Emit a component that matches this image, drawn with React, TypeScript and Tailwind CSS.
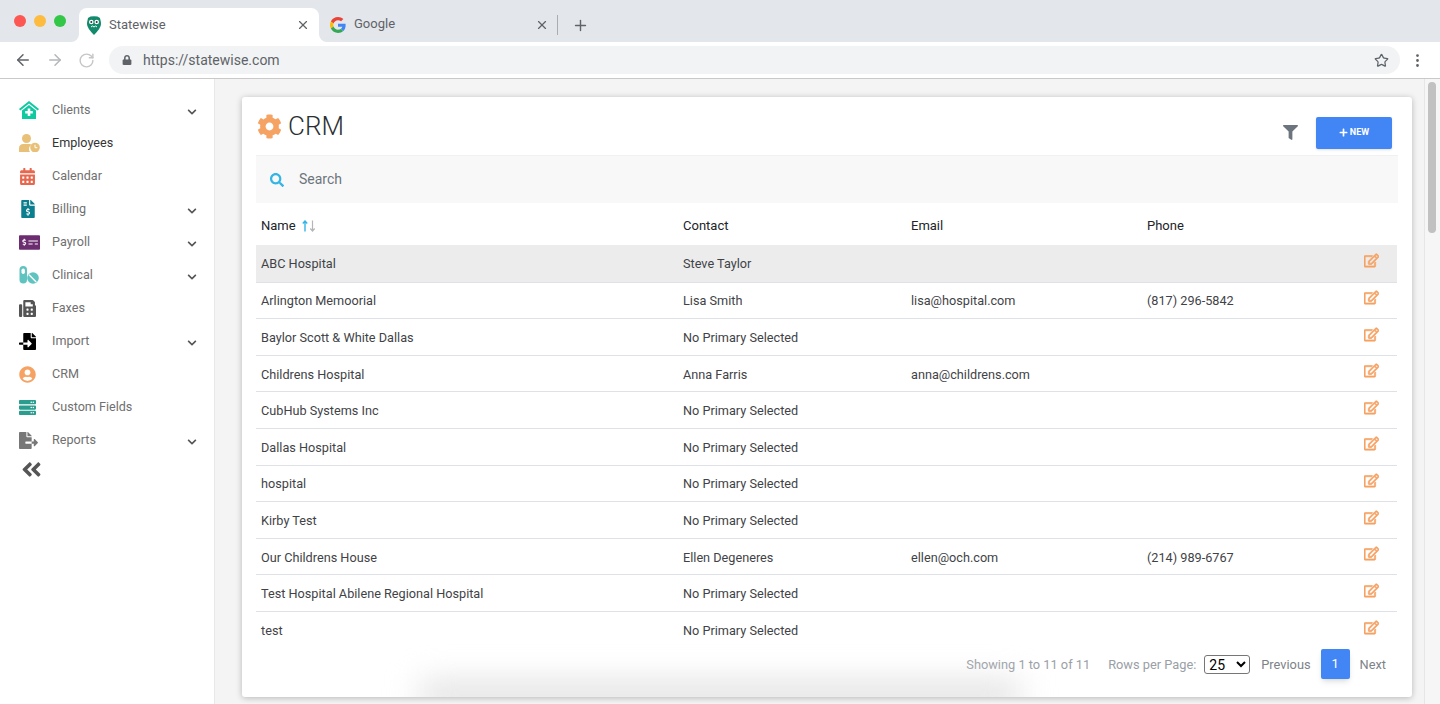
import {
  FaAngleDoubleLeft,
  FaCalendarAlt,
  FaChevronDown,
  FaCog,
  FaFax,
  FaFileExport,
  FaFileImport,
  FaFileInvoiceDollar,
  FaFilter,
  FaLock,
  FaMoneyCheckAlt,
  FaPlus,
  FaRegEdit,
  FaSearch,
  FaServer,
  FaUserCircle,
} from "react-icons/fa";
import { FiMoreVertical } from "react-icons/fi";
import { LuArrowLeft, LuArrowRight, LuPlus, LuRotateCw, LuStar, LuX } from "react-icons/lu";
import type { ReactNode } from "react";

function OwlIcon() {
  return (
    <svg width="14" height="19" viewBox="0 0 14 19">
      <path d="M1 2 L3.500 .6 Q7 0 10.500 .6 L13 2 Q14 6 14 8 Q14 12 7 19 Q0 12 0 8 Q0 6 1 2Z" fill="#128a6b" />
      <circle cx="4.300" cy="6" r="2.300" fill="#fff" />
      <circle cx="9.700" cy="6" r="2.300" fill="#fff" />
      <circle cx="4.300" cy="6" r="1" fill="#333" />
      <circle cx="9.700" cy="6" r="1" fill="#333" />
      <path d="M4 11 L5.500 10 L7 11 L8.500 10 L10 11" stroke="#fff" strokeWidth="1" fill="none" />
    </svg>
  );
}

function GoogleIcon() {
  return (
    <svg width="16" height="16" viewBox="0 0 48 48">
      <path fill="#EA4335" d="M24 9.500c3.500 0 6.700 1.200 9.200 3.600l6.900-6.900C35.900 2.400 30.500 0 24 0 14.600 0 6.500 5.400 2.600 13.200l8 6.200C12.500 13.700 17.800 9.500 24 9.500z" />
      <path fill="#4285F4" d="M46.900 24.500c0-1.600-.1-3.100-.4-4.500H24v9h12.900c-.6 3-2.200 5.500-4.700 7.200l7.700 6c4.500-4.200 7-10.300 7-17.700z" />
      <path fill="#FBBC05" d="M10.500 28.600c-.5-1.400-.8-3-.8-4.600s.3-3.200.8-4.600l-8-6.200C.9 16.500 0 20.100 0 24s.9 7.500 2.600 10.800l7.900-6.200z" />
      <path fill="#34A853" d="M24 48c6.500 0 11.900-2.100 15.900-5.800l-7.700-6c-2.100 1.400-4.900 2.300-8.200 2.300-6.200 0-11.500-4.200-13.400-9.900l-8 6.200C6.500 42.600 14.600 48 24 48z" />
    </svg>
  );
}

function HouseIcon() {
  return (
    <svg width="20" height="18" viewBox="0 0 20 18">
      <path d="M10 0 L20 8 L18.700 9.500 L10 2.600 L1.300 9.500 L0 8Z" fill="#0fc9a0" />
      <path d="M10 4 L17 9.500 V18 H3 V9.500Z" fill="#0fc9a0" />
      <path d="M8.700 7.500 H11.300 V10 H13.800 V12.600 H11.300 V15 H8.700 V12.600 H6.200 V10 H8.700Z" fill="#fff" />
    </svg>
  );
}

function EmployeeIcon() {
  return (
    <svg width="21" height="18" viewBox="0 0 21 18">
      <circle cx="7.500" cy="4.500" r="4.500" fill="#e9c077" />
      <path d="M0 18 V14.500 Q0 10 4.500 10 H10.500 Q12 10 12.500 10.500 Q10 12.500 10 15 Q10 17 11 18Z" fill="#e9c077" />
      <circle cx="16" cy="13.500" r="4.800" fill="#e9c077" />
      <path d="M16 10.800 V13.700 H18.300" stroke="#fff" strokeWidth="1" fill="none" />
    </svg>
  );
}

function PillsIcon() {
  return (
    <svg width="20" height="18" viewBox="0 0 20 18">
      <rect x="0.500" y="0" width="7.500" height="17.500" rx="3.750" fill="#5fc4c0" />
      <rect x="2.500" y="2.500" width="3.400" height="5.500" rx="1.700" fill="#fff" />
      <circle cx="14" cy="12" r="5.800" fill="#5fc4c0" />
      <path d="M10 8.800 L17.200 16" stroke="#fff" strokeWidth="1.400" />
    </svg>
  );
}

function SortIcon() {
  return (
    <svg width="16" height="12" viewBox="0 0 16 12" className="ml-[5px]">
      <path d="M4 11.500 V1 M1.800 3.500 L4 1 L6.200 3.500" stroke="#33b5e5" strokeWidth="1.400" fill="none" />
      <path d="M11.500 .5 V11 M9.300 8.500 L11.500 11 L13.700 8.500" stroke="#b5b5b5" strokeWidth="1.200" fill="none" />
    </svg>
  );
}

const navItems: { label: string; icon: ReactNode; sub?: boolean; active?: boolean }[] = [
  { label: "Clients", icon: <HouseIcon />, sub: true },
  { label: "Employees", icon: <EmployeeIcon />, active: true },
  { label: "Calendar", icon: <FaCalendarAlt className="text-[#e8684f] text-[17px]" /> },
  { label: "Billing", icon: <FaFileInvoiceDollar className="text-[#0c7f8f] text-[18px]" />, sub: true },
  { label: "Payroll", icon: <FaMoneyCheckAlt className="text-[#6b2c70] text-[21px]" />, sub: true },
  { label: "Clinical", icon: <PillsIcon />, sub: true },
  { label: "Faxes", icon: <FaFax className="text-[#555] text-[17px]" /> },
  { label: "Import", icon: <FaFileImport className="text-black text-[17px]" />, sub: true },
  { label: "CRM", icon: <FaUserCircle className="text-[#f6a263] text-[17px]" /> },
  { label: "Custom Fields", icon: <FaServer className="text-[#2a9d8f] text-[17px]" /> },
  { label: "Reports", icon: <FaFileExport className="text-[#777] text-[19px]" />, sub: true },
];

const rows = [
  ["ABC Hospital", "Steve Taylor", "", ""],
  ["Arlington Memoorial", "Lisa Smith", "lisa@hospital.com", "(817) 296-5842"],
  ["Baylor Scott & White Dallas", "No Primary Selected", "", ""],
  ["Childrens Hospital", "Anna Farris", "anna@childrens.com", ""],
  ["CubHub Systems Inc", "No Primary Selected", "", ""],
  ["Dallas Hospital", "No Primary Selected", "", ""],
  ["hospital", "No Primary Selected", "", ""],
  ["Kirby Test", "No Primary Selected", "", ""],
  ["Our Childrens House", "Ellen Degeneres", "ellen@och.com", "(214) 989-6767"],
  ["Test Hospital Abilene Regional Hospital", "No Primary Selected", "", ""],
  ["test", "No Primary Selected", "", ""],
];

function BrowserChrome() {
  return (
    <div className="shrink-0">
      <div className="flex h-[42px] bg-white">
        <div className="w-[79px] bg-[#e3e6ea] rounded-br-[8px] flex items-start gap-2 pl-[14px] pt-[15px]">
          <span className="w-3 h-3 rounded-full bg-[#fc5753]" />
          <span className="w-3 h-3 rounded-full bg-[#fdbc40]" />
          <span className="w-3 h-3 rounded-full bg-[#33c748]" />
        </div>
        <div className="w-[240px] bg-[#e3e6ea] pt-2">
          <div className="h-[34px] bg-white rounded-t-[8px] flex items-center pl-2 pr-[9px]">
            <OwlIcon />
            <span className="ml-2 text-[13px] text-[#5f6368] flex-1">Statewise</span>
            <LuX className="text-[#5f6368] text-[14px]" />
          </div>
        </div>
        <div className="flex-1 bg-[#e3e6ea] rounded-bl-[8px] flex items-center pt-2">
          <div className="w-[238px] flex items-center pl-[11px] pr-[8px]">
            <GoogleIcon />
            <span className="ml-[8px] text-[13px] text-[#5f6368] flex-1 -mt-[2px]">Google</span>
            <LuX className="text-[#5f6368] text-[14px]" />
          </div>
          <div className="w-px h-[20px] bg-[#a9adb2]" />
          <LuPlus className="ml-[14px] text-[#5f6368] text-[17px]" />
        </div>
      </div>
      <div className="h-[37px] bg-white border-b border-[#c9c9c9] flex items-center pl-[14px] pr-[14px]">
        <LuArrowLeft className="text-[#5f6368] text-[18px]" />
        <LuArrowRight className="text-[#b4b7ba] text-[18px] ml-[14px]" />
        <LuRotateCw className="text-[#c4c6c8] text-[17px] ml-[14px]" />
        <div className="ml-[14px] flex-1 h-[28px] rounded-full bg-[#f1f3f4] flex items-center pl-[13px] pr-[11px]">
          <FaLock className="text-[#5f6368] text-[10px]" />
          <span className="ml-[11px] text-[14px] text-[#5f6368] flex-1">https://statewise.com</span>
          <LuStar className="text-[#5f6368] text-[15px]" />
        </div>
        <FiMoreVertical className="ml-[9px] text-[#5f6368] text-[17px]" />
      </div>
    </div>
  );
}

function Sidebar() {
  return (
    <div className="w-[215px] shrink-0 bg-white pt-[14.500px] pl-[19px] pr-[16px] border-r border-[#e8e8e8]">
      {navItems.map((item) => (
        <div key={item.label} className="h-[33px] flex items-center">
          <div className="w-[33px] flex items-center">{item.icon}</div>
          <span className={`flex-1 text-[12.600px] ${item.active ? "text-[#333]" : "text-[#707070]"}`}>{item.label}</span>
          {item.sub && <FaChevronDown className="text-[#555] text-[10px] mt-[3px] mr-[1px]" />}
        </div>
      ))}
      <FaAngleDoubleLeft className="text-[#555] text-[23px] ml-[1px] mt-[1px]" />
    </div>
  );
}

function CrmCard() {
  return (
    <div className="relative w-[1170px] h-[600px] bg-white rounded-[3px] shadow-[0_1px_6px_rgba(0,0,0,0.25)] px-[14px] overflow-hidden">
      <div className="h-[58px] flex items-center">
        <FaCog className="text-[#f6a263] text-[25px] ml-px" />
        <span className="ml-[6px] text-[26px] font-light text-[#2b2f33] mt-[1px]">CRM</span>
        <FaFilter className="ml-auto text-[#6c757d] text-[15px] mt-[13px]" />
        <button className="ml-[18px] mr-[6px] mt-[13px] w-[76px] h-[32px] bg-[#4285f4] rounded-[2px] text-white text-[9px] font-bold flex items-center justify-center gap-[2px] shadow-sm">
          <FaPlus className="text-[9px]" />
          NEW
        </button>
      </div>
      <div className="h-[48px] bg-[#f8f8f8] border-t border-[#f1f1f1] flex items-center pl-[14px]">
        <FaSearch className="text-[#33b5e5] text-[14px]" />
        <span className="ml-[15px] text-[14px] text-[#6c757d]">Search</span>
      </div>
      <div className="h-[42px] pt-[4px] grid grid-cols-[422px_228px_236px_1fr] items-center text-[13px] text-[#212529]">
        <div className="pl-[5px] flex items-center">
          Name
          <SortIcon />
        </div>
        <div className="pl-[5px]">Contact</div>
        <div className="pl-[5px]">Email</div>
        <div className="pl-[5px]">Phone</div>
      </div>
      {rows.map((row, i) => (
        <div
          key={row[0]}
          className={`w-[1141px] pt-[1px] grid grid-cols-[422px_228px_236px_1fr] items-center text-[12.700px] text-[#3f4347] ${i === 10 ? "" : "border-b border-[#dee2e6]"} ${i === 0 ? "bg-[#ececec] h-[37.700px]" : "h-[36.600px]"}`}
        >
          <div className="pl-[5px]">{row[0]}</div>
          <div className="pl-[5px]">{row[1]}</div>
          <div className="pl-[5px]">{row[2]}</div>
          <div className="pl-[5px] flex items-center justify-between pr-[18px]">
            <span>{row[3]}</span>
            <FaRegEdit strokeWidth={24} stroke="currentColor" className="text-[#f6a263] text-[15px] -mt-[7px]" />
          </div>
        </div>
      ))}
      <div className="w-[1141px] flex items-center justify-end h-[31px] pr-[11px] text-[12.800px] text-[#9aa0a6]">
        <span>Showing 1 to 11 of 11</span>
        <span className="ml-[18px]">Rows per Page:</span>
        <select defaultValue="25" className="ml-[8px] w-[46px] h-[19px] border border-[#767676] rounded-[3px] bg-white text-[14px] text-black">
          <option value="25">25</option>
          <option value="50">50</option>
        </select>
        <span className="ml-[11px] text-[#7d8389]">Previous</span>
        <span className="ml-[10px] w-[29px] h-[30px] bg-[#4285f4] text-white rounded-[2px] flex items-center justify-center shadow-md text-[13px]">1</span>
        <span className="ml-[10px] text-[#7d8389]">Next</span>
      </div>
      <div className="absolute bottom-[-10px] left-[178px] w-[600px] h-[24px] bg-[#dcdcdc] blur-lg" />
    </div>
  );
}

export default function App() {
  return (
    <div className="w-[1440px] h-[704px] overflow-hidden flex flex-col font-['Roboto',sans-serif] bg-white">
      <BrowserChrome />
      <div className="flex flex-1 min-h-0">
        <Sidebar />
        <div className="flex-1 bg-[#f4f4f4] pt-[18px] pl-[27px]">
          <CrmCard />
        </div>
        <div className="w-[16px] shrink-0 bg-[#f6f6f6] border-l border-[#e6e6e6] pt-[3px] pl-[3px]">
          <div className="w-[8px] h-[151px] rounded-full bg-[#c1c1c1]" />
        </div>
      </div>
    </div>
  );
}
